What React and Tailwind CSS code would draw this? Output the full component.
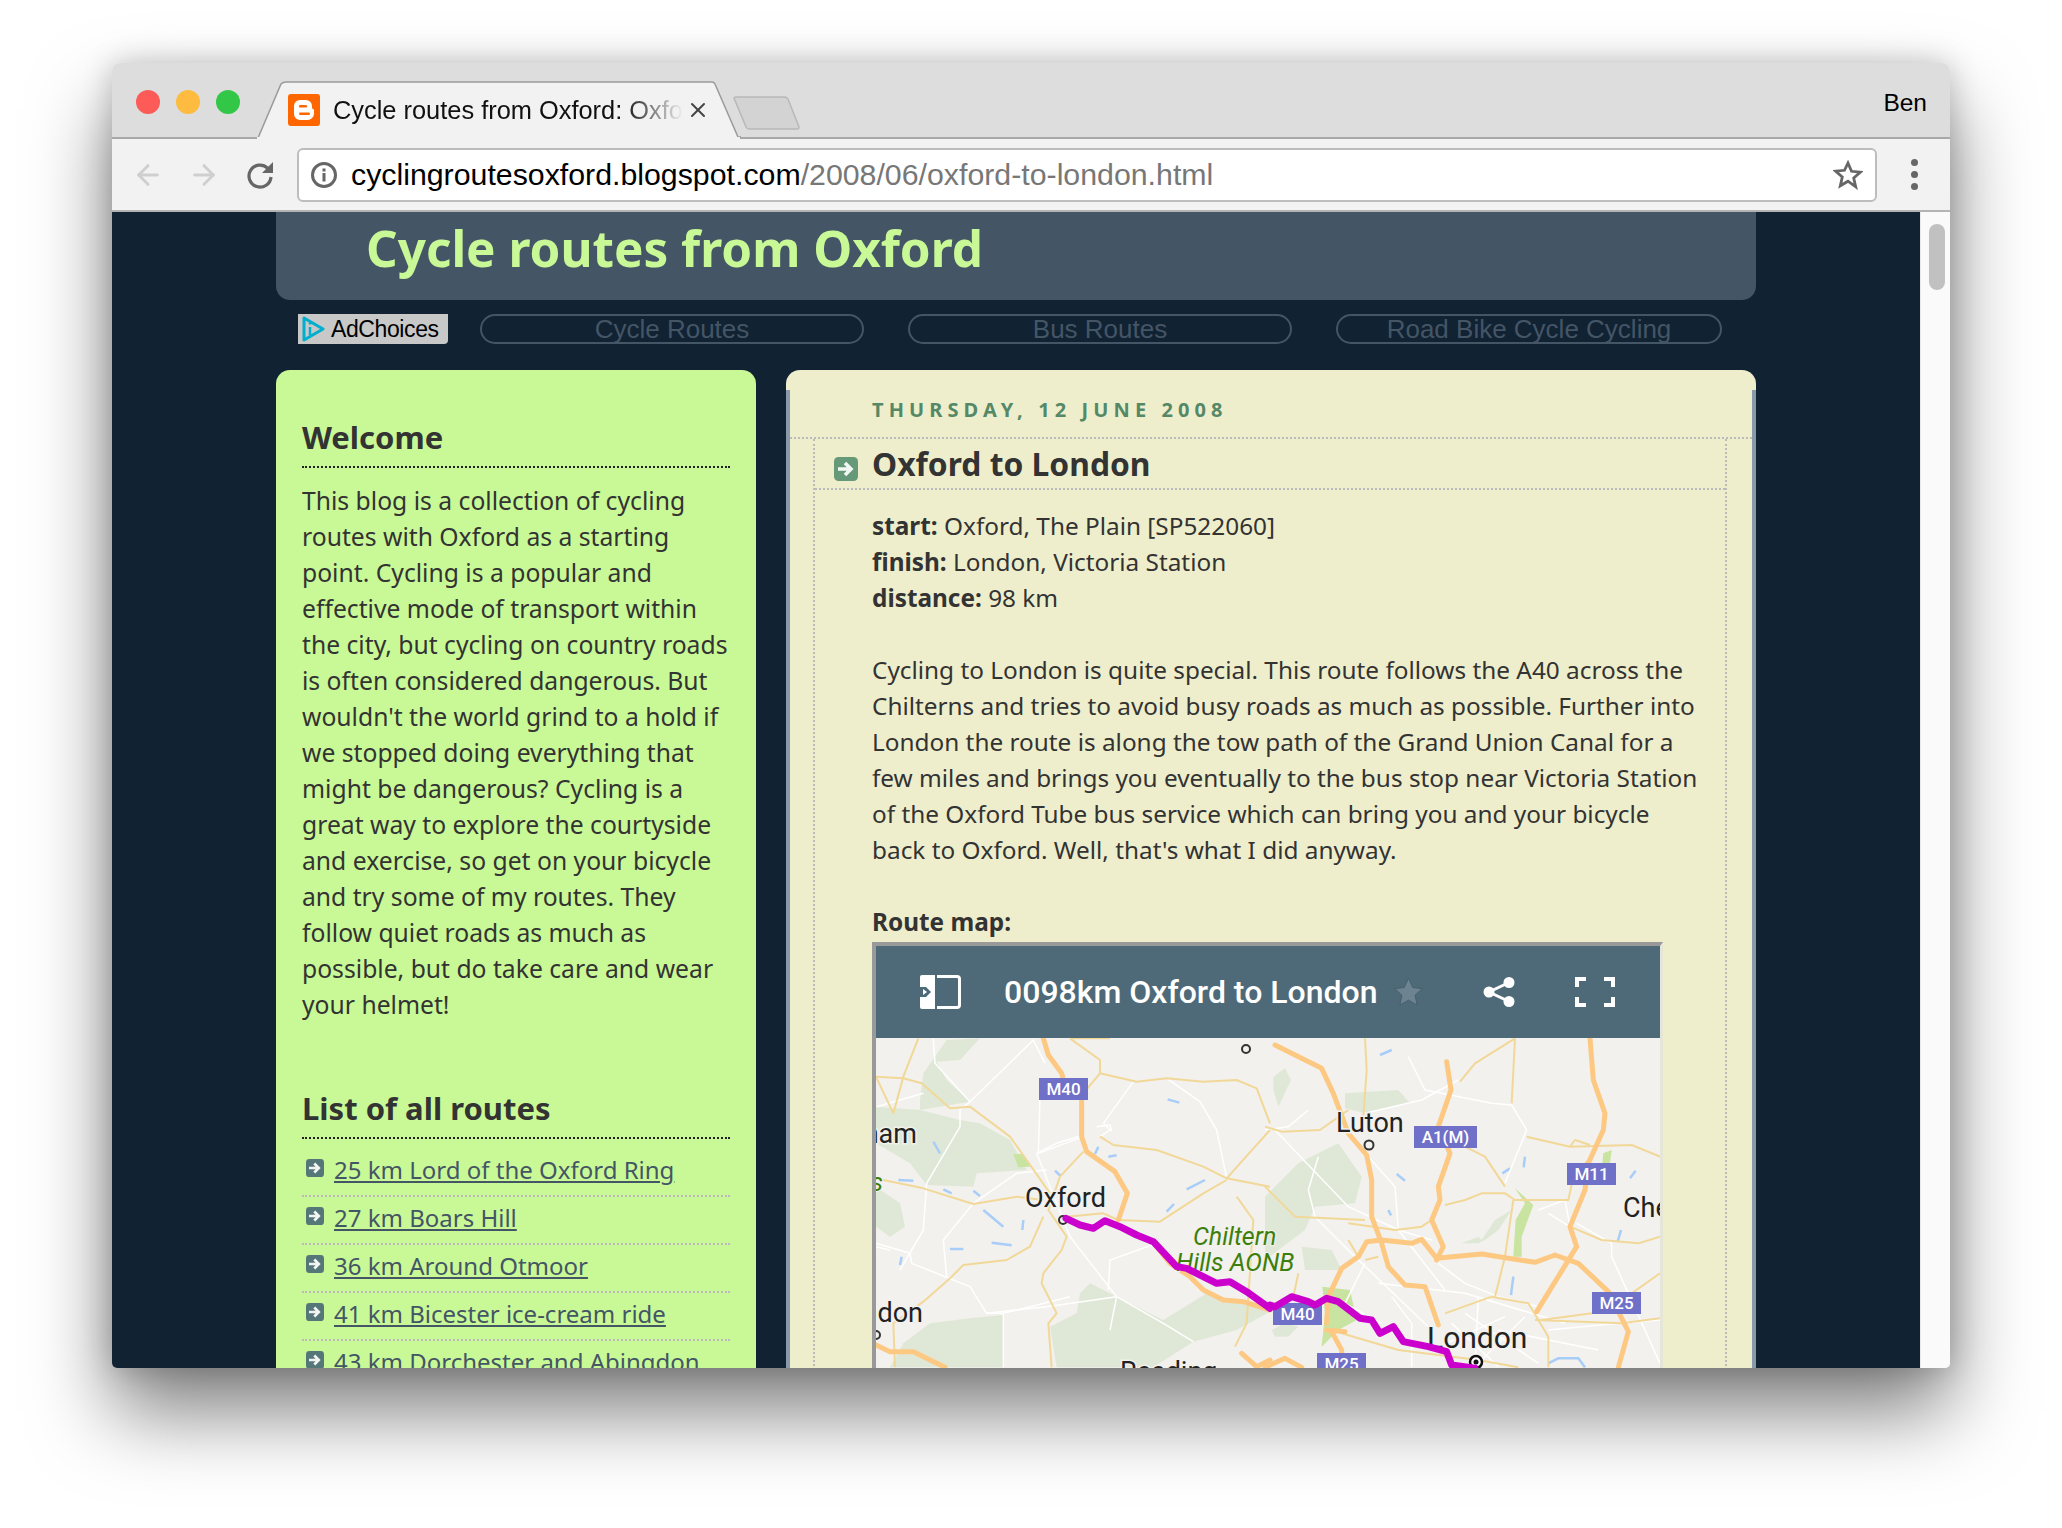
import React from "react";
import { ArrowLeft, ArrowRight, X } from "lucide-react";

const welcomeLines = [
  "This blog is a collection of cycling",
  "routes with Oxford as a starting",
  "point. Cycling is a popular and",
  "effective mode of transport within",
  "the city, but cycling on country roads",
  "is often considered dangerous. But",
  "wouldn't the world grind to a hold if",
  "we stopped doing everything that",
  "might be dangerous? Cycling is a",
  "great way to explore the courtyside",
  "and exercise, so get on your bicycle",
  "and try some of my routes. They",
  "follow quiet roads as much as",
  "possible, but do take care and wear",
  "your helmet!",
];

const routes = [
  "25 km Lord of the Oxford Ring",
  "27 km Boars Hill",
  "36 km Around Otmoor",
  "41 km Bicester ice-cream ride",
  "43 km Dorchester and Abingdon",
];

const postLines = [
  "Cycling to London is quite special. This route follows the A40 across the",
  "Chilterns and tries to avoid busy roads as much as possible. Further into",
  "London the route is along the tow path of the Grand Union Canal for a",
  "few miles and brings you eventually to the bus stop near Victoria Station",
  "of the Oxford Tube bus service which can bring you and your bicycle",
  "back to Oxford. Well, that's what I did anyway.",
];

// map coordinates were read off two crops of the reference
const L = (p) => p.map(([x, y]) => `${x / 3 - 6},${y / 3 - 8}`).join(" ");
const R = (p) => p.map(([x, y]) => `${389 + x / 3},${y / 3 - 8}`).join(" ");

const greensL = [
  [[150,210],[160,130],[230,30],[330,25],[270,90],[200,95],[230,150],[300,215],[150,240]],
  [[18,230],[150,240],[270,270],[330,280],[420,330],[470,420],[320,430],[310,470],[170,465],[120,400],[18,340]],
  [[18,470],[90,520],[105,590],[60,620],[18,590]],
  [[100,940],[180,880],[300,865],[400,855],[400,1012],[60,1012]],
  [[630,790],[660,760],[740,800],[880,870],[1010,790],[1120,820],[1200,845],[1100,900],[970,935],[850,1012],[560,1012],[540,890],[620,850]],
  [[280,400],[300,365],[330,400],[310,410]],
];
const greensR = [
  [[0,500],[100,400],[220,340],[290,440],[270,520],[150,530],[120,600],[0,690]],
  [[240,190],[400,180],[435,220],[300,250],[240,235]],
  [[25,140],[60,115],[78,150],[40,230],[25,180]],
  [[110,650],[200,660],[230,720],[120,720]],
  [[590,640],[640,620],[650,630],[690,570],[740,540],[700,600],[660,630],[640,640]],
  [[20,900],[60,880],[100,890],[70,920],[30,920]],
];
const parksL = [[[430,372],[460,372],[480,410],[445,412]]];
const parksR = [
  [[750,475],[805,525],[770,620],[770,680],[745,680],[752,570],[780,520]],
  [[172,770],[255,780],[275,870],[220,900],[170,950],[180,850]],
  [[1015,370],[1040,360],[1035,400],[1012,400]],
];
const whiteL = [
  [[190,25],[195,100],[300,215],[270,240],[270,290],[170,460],[160,600],[90,720]],
  [[18,640],[120,670],[125,700],[300,770],[350,850],[530,830],[740,800],[880,880],[970,935]],
  [[300,215],[490,30],[525,100]],
  [[510,200],[505,370],[640,320]],
  [[790,155],[700,280],[720,300],[690,320]],
  [[1070,445],[1040,300],[990,215],[890,145]],
  [[310,520],[220,630],[230,740]],
  [[500,370],[600,620],[740,800]],
  [[400,850],[400,1012]],
  [[160,190],[20,230]],
  [[500,370],[560,340],[640,315]],
  [[310,520],[440,430],[530,420]],
  [[860,640],[720,690],[715,780]],
  [[680,290],[720,285],[725,305]],
  [[740,800],[720,900]],
  [[350,850],[400,850],[600,800]],
  [[18,650],[60,660]],
];
const whiteR = [
  [[30,300],[250,530],[400,600],[540,780]],
  [[430,80],[480,180],[680,220],[740,225],[785,300],[720,460]],
  [[160,380],[130,480],[150,560],[270,680],[500,900]],
  [[300,250],[470,210],[580,150]],
  [[310,380],[390,470],[400,600],[500,630]],
  [[820,540],[900,510],[915,590],[850,550]],
  [[935,580],[1040,640],[1040,680],[1185,1000]],
  [[520,700],[600,760],[700,800],[820,830]],
  [[380,800],[440,880],[440,1012]],
  [[340,760],[600,790],[900,880]],
  [[560,880],[700,1010]],
  [[640,800],[630,1012]],
  [[720,860],[500,960]],
  [[300,700],[240,820],[350,880]],
  [[600,850],[820,1000]],
  [[780,860],[640,1000]],
  [[850,900],[1060,880],[1185,870]],
  [[700,900],[1000,960]],
  [[0,300],[70,290],[130,240]],
];
const yellowL = [
  [[18,140],[100,145],[155,160],[240,235],[300,230],[420,320],[470,390],[540,490]],
  [[70,250],[100,140],[145,25]],
  [[18,140],[70,250]],
  [[40,450],[160,475],[310,522],[440,500],[520,510]],
  [[600,25],[690,90],[690,130],[640,190]],
  [[690,130],[800,155],[890,145],[1000,155],[1100,150],[1160,175],[1200,280]],
  [[690,320],[730,345],[860,360],[1000,410],[1070,445],[1110,400],[1200,300]],
  [[1070,445],[1200,470]],
  [[640,365],[570,440],[535,540],[590,620],[575,660],[520,730],[515,760],[560,850],[535,880],[545,1012]],
  [[520,560],[480,650],[410,690],[280,705],[240,745],[160,815],[70,880],[75,1012]],
  [[745,570],[870,575],[1000,490],[1070,450]],
  [[600,25],[720,25]],
  [[590,560],[700,550],[745,570]],
  [[1100,500],[1150,570],[1130,880],[1095,950]],
];
const yellowR = [
  [[300,25],[305,120],[295,260]],
  [[0,290],[50,305],[165,300],[250,240]],
  [[0,470],[90,560],[300,570]],
  [[250,580],[390,600],[470,590],[500,570]],
  [[540,525],[600,510],[650,490],[720,490],[750,510],[910,510],[925,440],[970,390]],
  [[600,350],[660,380],[720,470]],
  [[585,155],[630,100],[750,25]],
  [[740,220],[750,25]],
  [[785,320],[915,350],[1100,345],[1185,380]],
  [[915,350],[930,330],[975,345]],
  [[745,510],[720,680],[690,800]],
  [[915,590],[1010,630],[1120,640],[1185,620]],
  [[680,800],[790,820],[850,920],[850,1012]],
  [[540,850],[680,800]],
  [[830,870],[980,850],[1100,790],[1185,730]],
  [[230,910],[400,960],[640,990],[760,1012]],
  [[810,870],[1070,880],[1185,865]],
  [[100,730],[85,800]],
  [[250,630],[280,680]],
  [[300,690],[340,680]],
];
const motorL = [
  [[520,25],[535,75],[575,130],[580,150]],
  [[635,210],[635,320],[650,365],[735,425],[772,490],[745,570]],
  [[860,650],[900,700],[960,740],[1000,780],[1060,810],[1120,815],[1200,840]],
  [[18,945],[60,965],[130,965],[225,1012]],
  [[1115,970],[1160,1010],[1200,990]],
];
const motorR = [
  [[30,45],[170,115],[205,190],[250,310],[305,375],[320,450],[320,560],[350,640],[370,710],[420,765],[480,770],[520,885]],
  [[545,95],[558,180],[520,290],[555,370],[520,470],[525,510],[500,570],[535,650],[515,690]],
  [[185,880],[190,800],[230,715],[280,680],[305,635],[350,630],[440,640],[470,628],[515,685],[650,672],[810,697],[870,675],[940,700],[1030,785],[1090,905],[1060,1012]],
  [[975,25],[985,150],[1020,250],[1015,300],[970,400],[960,480],[915,590],[935,650],[815,845]],
  [[185,900],[240,905]],
  [[200,905],[230,960],[230,1012]],
  [[0,1012],[60,985],[110,1012]],
];
const waterL = [
  [[190,335],[210,370]],[[85,450],[130,452]],[[220,478],[245,490]],[[310,482],[330,498]],[[340,540],[400,590]],
  [[365,638],[425,646]],[[240,657],[280,657]],[[95,680],[90,705]],[[460,570],[457,600]],[[715,380],[740,376]],
  [[950,478],[1005,450]],[[890,545],[912,522]],[[893,208],[928,218]],[[555,422],[572,438]],[[685,350],[675,372]],
];
const waterR = [
  [[345,75],[380,60]],[[395,432],[420,452]],[[712,430],[735,415]],[[780,380],[776,412]],[[1095,445],[1112,422]],
  [[1068,600],[1058,635]],[[745,740],[738,795]],[[370,540],[378,556]],[[850,1000],[880,985],[940,985],[960,1012]],
];

const badges = [
  ["M40", 163, 40, 49],
  ["A1(M)", 538, 88, 63],
  ["M11", 691, 125, 49],
  ["M25", 716, 254, 49],
  ["M40", 397, 265, 49],
  ["M25", 441, 315, 49],
];

const RouteMap = () => (
  <svg width="784" height="330" viewBox="0 0 784 330" className="block font-['Roboto',sans-serif]">
    <rect width="784" height="330" fill="#f2f1ed" />
    {greensL.map((p, i) => <polygon key={i} points={L(p)} fill="#dfe8d6" />)}
    {greensR.map((p, i) => <polygon key={i} points={R(p)} fill="#dfe8d6" />)}
    {parksL.map((p, i) => <polygon key={i} points={L(p)} fill="#c9e3a0" />)}
    {parksR.map((p, i) => <polygon key={i} points={R(p)} fill="#c9e3a0" />)}
    <g fill="none" stroke="#a8cdf8" strokeWidth="2.5">
      {waterL.map((p, i) => <polyline key={i} points={L(p)} />)}
      {waterR.map((p, i) => <polyline key={i} points={R(p)} />)}
    </g>
    <g fill="none" stroke="#ffffff" strokeWidth="1.5" strokeLinejoin="round">
      {whiteL.map((p, i) => <polyline key={i} points={L(p)} />)}
      {whiteR.map((p, i) => <polyline key={i} points={R(p)} />)}
    </g>
    <g fill="none" stroke="#f2d898" strokeWidth="2" strokeLinejoin="round">
      {yellowL.map((p, i) => <polyline key={i} points={L(p)} />)}
      {yellowR.map((p, i) => <polyline key={i} points={R(p)} />)}
    </g>
    <g fill="none" stroke="#fdc882" strokeWidth="5" strokeLinejoin="round" strokeLinecap="round">
      {motorL.map((p, i) => <polyline key={i} points={L(p)} />)}
      {motorR.map((p, i) => <polyline key={i} points={R(p)} />)}
    </g>

    {badges.map(([t, x, y, w], i) => (
      <g key={i}>
        <rect x={x} y={y} width={w} height="22" fill="#6f70c8" />
        <text x={x + w / 2} y={y + 17} textAnchor="middle" fill="#fff" fontSize="17" fontWeight="500">{t}</text>
      </g>
    ))}

    <g fill="#f2f1ed" stroke="#333" strokeWidth="2">
      <circle cx="187" cy="182" r="4" />
      <circle cx="493" cy="107" r="4.5" />
      <circle cx="370" cy="11" r="4" />
      <circle cx="0" cy="297" r="4" />
    </g>
    <circle cx="600" cy="324" r="6" fill="#fff" stroke="#111" strokeWidth="2.5" />
    <circle cx="600" cy="324" r="2.5" fill="#111" />

    <g fill="#222" stroke="#f2f1ed" strokeWidth="3" paintOrder="stroke" fontSize="27">
      <text x="149" y="169">Oxford</text>
      <text x="460" y="94">Luton</text>
      <text x="551" y="310" fontSize="30">London</text>
      <text x="41" y="105" textAnchor="end">ham</text>
      <text x="47" y="284" textAnchor="end">ndon</text>
      <text x="747" y="179">Che</text>
      <text x="244" y="343">Reading</text>
    </g>
    <g fill="#3d7f0a" stroke="#f2f1ed" strokeWidth="2" paintOrder="stroke" fontSize="25" fontStyle="italic">
      <text x="317" y="207">Chiltern</text>
      <text x="300" y="233">Hills AONB</text>
      <text x="7" y="153" textAnchor="end">s</text>
    </g>

    <polyline
      points={
        L([[588,565],[630,585],[670,595],[705,572],[750,590],[800,615],[850,635],[920,710],[950,715],[1040,760],[1080,755],[1130,785],[1200,835]]) +
        " " +
        R([[15,825],[30,830],[80,800],[130,815],[150,825],[185,805],[220,815],[285,865],[320,870],[345,910],[385,890],[415,935],[490,950],[545,965],[560,1005],[630,1015]])
      }
      fill="none"
      stroke="#cc00cc"
      strokeWidth="7"
      strokeLinejoin="round"
      strokeLinecap="round"
    />
  </svg>
);

const ArrowBox = ({ size, color }) => (
  <svg width={size} height={size} viewBox="0 0 24 24" className="shrink-0">
    <rect width="24" height="24" rx="4.5" fill={color} />
    <path d="M4 12h13M11 6l6 6-6 6" fill="none" stroke="#fff" strokeWidth="3.6" opacity="0.92" />
  </svg>
);

const Pill = ({ children, className }) => (
  <div className={`h-[30px] rounded-full border-2 border-[#445566] text-center text-[26px] leading-[27px] text-[#445566] font-['Liberation_Sans',sans-serif] ${className}`}>
    {children}
  </div>
);

const Heading = ({ children, className }) => (
  <div className={`ml-[26px] mr-[26px] border-b-2 border-dotted border-[#222] text-[31px] leading-[40px] font-bold text-[#333] pb-[9px] ${className}`}>
    {children}
  </div>
);

export default function App() {
  return (
    <div className="w-[2062px] h-[1528px] bg-white pt-[63px] pl-[112px] overflow-hidden">
      <div className="w-[1838px] h-[1305px] rounded-t-[8px] rounded-b-[5px] overflow-hidden flex flex-col shadow-[0_44px_80px_rgba(0,0,0,0.5),0_0_30px_rgba(0,0,0,0.2)] font-['Liberation_Sans',sans-serif]">
        {/* title bar */}
        <div className="relative h-[76px] shrink-0 bg-[#dddddd] border-b-2 border-[#a8a8a8] flex">
          <div className="flex gap-[16px] pl-[24px] pt-[27px]">
            <div className="w-[24px] h-[24px] rounded-full bg-[#fc5b57]" />
            <div className="w-[24px] h-[24px] rounded-full bg-[#fdbb3f]" />
            <div className="w-[24px] h-[24px] rounded-full bg-[#33c748]" />
          </div>
          <svg className="absolute left-[140px] top-[14px]" width="560" height="62" viewBox="0 0 560 62">
            <path d="M5 61H6L29 7Q31 5 34 5H460Q462 5 463 7L486 60H489" fill="#f2f2f2" stroke="#9a9a9a" strokeWidth="1.5" />
            <rect x="5" y="60" width="483" height="2" fill="#f2f2f2" />
            <path d="M482 21Q482 20 484 20H532Q535 20 536 22L547 50Q547 52 545 52H497Q495 52 494 50Z" fill="#d3d3d3" stroke="#b8b8b8" strokeWidth="1.5" />
          </svg>
          <svg className="absolute left-[176px] top-[31px]" width="32" height="32" viewBox="0 0 32 32">
            <rect width="32" height="32" rx="3" fill="#ff6600" />
            <path d="M12 6h6a6 6 0 0 1 6 6v1.5a2 2 0 0 0 2 2v4a6.500 6.500 0 0 1-6.500 6.500H12a6 6 0 0 1-6-6V12a6 6 0 0 1 6-6z" fill="#fff" />
            <rect x="11" y="11" width="8" height="2.500" rx="1.200" fill="#ff6600" />
            <rect x="11" y="18.500" width="11" height="2.500" rx="1.200" fill="#ff6600" />
          </svg>
          <div className="absolute left-[221px] top-[32px] w-[350px] overflow-hidden whitespace-nowrap text-[25.400px] leading-[30px] text-[#111] [mask-image:linear-gradient(to_right,black_83%,transparent_100%)]">
            Cycle routes from Oxford: Oxford to London
          </div>
          <X className="absolute left-[574px] top-[35px] text-[#444]" size={24} strokeWidth={2} />
          <div className="ml-auto pr-[23px] pt-[25px] text-[24.500px] leading-[30px] text-black">Ben</div>
        </div>

        {/* toolbar */}
        <div className="h-[73px] shrink-0 bg-[#f2f2f2] border-b-2 border-[#b4b4b4] flex items-center">
          <ArrowLeft className="ml-[20px] text-[#cfcfcf]" size={32} strokeWidth={2.2} />
          <ArrowRight className="ml-[24px] text-[#cfcfcf]" size={32} strokeWidth={2.2} />
          <svg className="ml-[25px]" width="32" height="32" viewBox="0 0 32 32">
            <path d="M26 18a11 11 0 1 1-3.500-9" fill="none" stroke="#666" strokeWidth="3.200" />
            <path d="M28 3v11H17z" fill="#666" />
          </svg>
          <div className="ml-[20px] w-[1580px] h-[54px] bg-white border-2 border-[#bdbdbd] rounded-[6px] flex items-center">
            <svg className="ml-[12px]" width="26" height="26" viewBox="0 0 26 26">
              <circle cx="13" cy="13" r="11.500" fill="none" stroke="#666" strokeWidth="3" />
              <rect x="11.500" y="11" width="3" height="8.500" fill="#666" />
              <rect x="11.500" y="6.500" width="3" height="3" fill="#666" />
            </svg>
            <div className="ml-[14px] text-[30.300px] leading-[34px] whitespace-nowrap text-black">
              cyclingroutesoxford.blogspot.com<span className="text-[#777]">/2008/06/oxford-to-london.html</span>
            </div>
            <svg className="ml-auto mr-[12px]" width="30" height="30" viewBox="0 0 30 30">
              <path d="M15 3l3.500 8.300 9 .8-6.800 5.900 2 8.800L15 21.200 7.300 25.800l2-8.800-6.800-5.900 9-.8z" fill="none" stroke="#666" strokeWidth="2.800" strokeLinejoin="miter" />
            </svg>
          </div>
          <div className="ml-[34px] flex flex-col gap-[5px]">
            <div className="w-[7px] h-[7px] rounded-full bg-[#666]" />
            <div className="w-[7px] h-[7px] rounded-full bg-[#666]" />
            <div className="w-[7px] h-[7px] rounded-full bg-[#666]" />
          </div>
        </div>

        {/* page */}
        <div className="flex-1 min-h-0 flex">
          <div className="flex-1 min-w-0 bg-[#112233] pl-[164px] overflow-hidden font-['Noto_Sans',sans-serif]">
            <div className="w-[1480px] h-[88px] bg-[#445566] rounded-b-[14px] pl-[90px] text-[49.400px] leading-[72px] font-bold text-[#c9f996]">
              Cycle routes from Oxford
            </div>

            <div className="mt-[14px] flex items-start">
              <div className="ml-[22px] w-[150px] h-[30px] bg-[#c8c8c8] rounded-br-[4px] flex items-center font-['Liberation_Sans',sans-serif]">
                <svg className="ml-[3px]" width="26" height="26" viewBox="0 0 26 26">
                  <path d="M3 2l19 11L3 24z" fill="none" stroke="#00aecd" strokeWidth="3" strokeLinejoin="round" />
                  <path d="M9 11v8M9 6.500v2" stroke="#00aecd" strokeWidth="2.500" />
                </svg>
                <span className="ml-[4px] text-[23px] leading-[30px] text-black tracking-[-0.4px]">AdChoices</span>
              </div>
              <Pill className="ml-[32px] w-[384px]">Cycle Routes</Pill>
              <Pill className="ml-[44px] w-[384px]">Bus Routes</Pill>
              <Pill className="ml-[44px] w-[386px]">Road Bike Cycle Cycling</Pill>
            </div>

            <div className="mt-[26px] flex items-start text-[#333]">
              {/* sidebar */}
              <div className="w-[480px] h-[1000px] bg-[#c9f996] rounded-t-[14px] pt-[47px]">
                <Heading>Welcome</Heading>
                <div className="ml-[26px] mt-[15px] text-[24.700px] leading-[36px] whitespace-nowrap">
                  {welcomeLines.map((line) => (
                    <div key={line}>{line}</div>
                  ))}
                </div>
                <Heading className="mt-[65px]">List of all routes</Heading>
                <div className="mx-[26px] mt-[10px] text-[24px] leading-[36px]">
                  {routes.map((r) => (
                    <div key={r} className="h-[48px] pt-[3px] border-b-2 border-dotted border-[#bbbbbb] flex items-start">
                      <div className="ml-[4px] mt-[7px] mr-[10px] flex">
                        <ArrowBox size={18} color="#557777" />
                      </div>
                      <a className="underline text-[#445566] whitespace-nowrap">{r}</a>
                    </div>
                  ))}
                </div>
              </div>

              {/* post */}
              <div className="ml-[30px] w-[970px] h-[1000px]">
                <div className="h-[20px] bg-[#eeeecc] rounded-t-[14px]" />
                <div className="h-[980px] bg-[#eeeecc] border-x-4 border-[#8899aa]">
                  <div className="h-[49px] border-b-2 border-dotted border-[#bbbbbb] pl-[82px] pt-[6px] text-[20px] leading-[28px] font-bold tracking-[5.100px] text-[#558866] whitespace-nowrap">
                    THURSDAY, 12 JUNE 2008
                  </div>
                  <div className="ml-[23px] mr-[25px] h-[931px] border-x-2 border-dotted border-[#bbbbbb]">
                    <div className="h-[51px] border-b-2 border-dotted border-[#bbbbbb] flex items-start">
                      <div className="ml-[19px] mt-[18px] flex">
                        <ArrowBox size={24} color="#669977" />
                      </div>
                      <div className="ml-[14px] mt-[3px] text-[31.800px] leading-[44px] font-bold text-[#333]">Oxford to London</div>
                    </div>
                    <div className="pl-[57px] pt-[18px] text-[24.350px] leading-[36px] whitespace-nowrap">
                      <div><b>start:</b> Oxford, The Plain [SP522060]</div>
                      <div><b>finish:</b> London, Victoria Station</div>
                      <div><b>distance:</b> 98 km</div>
                      <div className="mt-[36px]">
                        {postLines.map((line) => (
                          <div key={line}>{line}</div>
                        ))}
                      </div>
                      <div className="mt-[36px] font-bold">Route map:</div>
                      <div className="w-[791px] mt-[2px] border-l-4 border-t-4 border-r-[3px] border-l-[#999] border-t-[#999] border-r-[#e6e6d8]">
                        <div className="h-[92px] bg-[#4e6a78] flex items-center text-white">
                          <svg className="ml-[44px]" width="41" height="34" viewBox="0 0 41 34">
                            <path d="M2 0h13v34H2a2 2 0 0 1-2-2V2a2 2 0 0 1 2-2z" fill="#fff" />
                            <path d="M0 12h6l5 5-5 5H0" fill="#4e6a78" />
                            <path d="M3 14l4 3-4 3z" fill="#fff" />
                            <path d="M17 1.500h20a2.500 2.500 0 0 1 2.500 2.500v26a2.500 2.500 0 0 1-2.500 2.500H17" fill="none" stroke="#fff" strokeWidth="3" />
                          </svg>
                          <div className="ml-[43px] text-[32px] leading-[40px] font-medium whitespace-nowrap font-['Roboto',sans-serif]">0098km Oxford to London</div>
                          <svg className="ml-[15px]" width="31" height="30" viewBox="0 0 24 24">
                            <path d="M12 1l3.400 7.400 7.600.9-5.700 5.200 1.600 8L12 18.500 5.100 22.500l1.600-8L1 9.300l7.600-.9z" fill="#6d8391" stroke="#46606d" strokeWidth="0.800" />
                          </svg>
                          <svg className="ml-[59px]" width="32" height="30" viewBox="0 0 32 30">
                            <path d="M25 6L6 15l19 9" fill="none" stroke="#fff" strokeWidth="3" />
                            <circle cx="26" cy="5.500" r="5.500" fill="#fff" />
                            <circle cx="6" cy="15" r="5.500" fill="#fff" />
                            <circle cx="26" cy="24.500" r="5.500" fill="#fff" />
                          </svg>
                          <svg className="ml-[60px]" width="40" height="30" viewBox="0 0 40 30">
                            <path d="M2 10V2h9M29 2h9v8M38 20v8h-9M11 28H2v-8" fill="none" stroke="#fff" strokeWidth="4" />
                          </svg>
                        </div>
                        <RouteMap />
                      </div>
                    </div>
                  </div>
                </div>
              </div>
            </div>
          </div>

          {/* scrollbar */}
          <div className="w-[30px] shrink-0 bg-[#fafafa] border-l border-[#e8e8e8] pt-[12px] pl-[8px]">
            <div className="w-[16px] h-[66px] rounded-full bg-[#c1c1c1]" />
          </div>
        </div>
      </div>
    </div>
  );
}
